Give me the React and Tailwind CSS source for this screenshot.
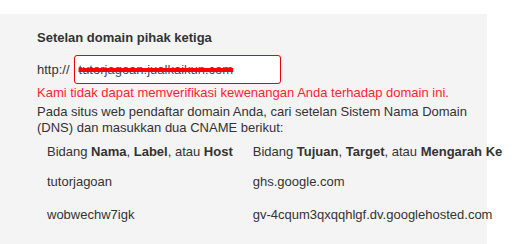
import React from 'react';

export default function App() {
  const rows = [
    { host: 'tutorjagoan', target: 'ghs.google.com' },
    { host: 'wobwechw7igk', target: 'gv-4cqum3qxqqhlgf.dv.googlehosted.com' },
  ];

  return (
    <div className="w-[523px] h-[244px] bg-white overflow-hidden font-['Liberation_Sans',Arial,sans-serif] text-[13px] text-[#333]">
      <div className="mt-[14px] w-[487px] h-[230px] bg-[#f4f4f4] pl-[37px] pt-[16px]">
        {/* Heading */}
        <h3 className="font-bold text-[13px] leading-[16px]">Setelan domain pihak ketiga</h3>

        {/* Domain input */}
        <div className="flex items-center mt-[9px]">
          <span className="mr-[4px]">http://</span>
          <div className="w-[207px] h-[29px] border border-[#e00] rounded-[3px] bg-white flex items-center pl-[4px]">
            <span className="text-[#3a4a6a] line-through decoration-[#f00] decoration-[4px] leading-[14px]">
              tutorjagoan.jualkaikun.com
            </span>
          </div>
        </div>

        {/* Error */}
        <p className="text-[#ff1f2f] leading-[16px] mt-[1px]">
          Kami tidak dapat memverifikasi kewenangan Anda terhadap domain ini.
        </p>

        <p className="leading-[16px] mt-[3px] w-[440px]">
          Pada situs web pendaftar domain Anda, cari setelan Sistem Nama Domain (DNS) dan masukkan dua CNAME berikut:
        </p>

        {/* CNAME table */}
        <table className="mt-[3px] ml-[10px] border-collapse whitespace-nowrap">
          <thead>
            <tr className="h-[26px]">
              <th className="font-normal text-left pr-[20px] align-middle">
                Bidang <b>Nama</b>, <b>Label</b>, atau <b>Host</b>
              </th>
              <th className="font-normal text-left align-middle">
                Bidang <b>Tujuan</b>, <b>Target</b>, atau <b>Mengarah Ke</b>
              </th>
            </tr>
          </thead>
          <tbody>
            {rows.map((r) => (
              <tr key={r.host} className="h-[33px]">
                <td className="pr-[20px] align-middle">{r.host}</td>
                <td className="align-middle">{r.target}</td>
              </tr>
            ))}
          </tbody>
        </table>
      </div>
    </div>
  );
}
